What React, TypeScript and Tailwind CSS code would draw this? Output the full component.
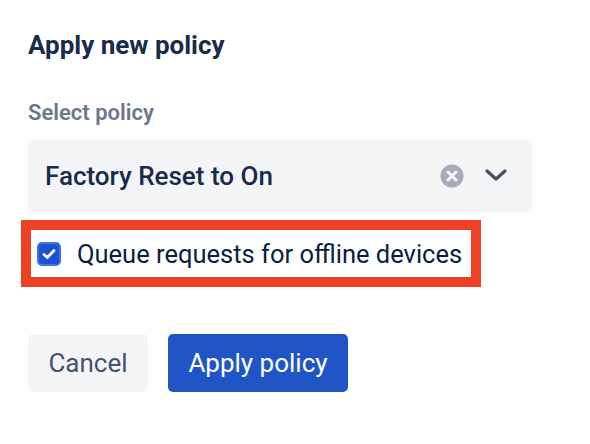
import React from "react";

export default function App() {
  return (
    <div className="w-[590px] h-[444px] bg-white font-['Roboto',sans-serif] text-[#172b4d]">
      <div className="pl-[28px] pt-[30px] flex flex-col">
        <h1 className="text-[26px] leading-[30px] font-bold">Apply new policy</h1>
        <div className="mt-[40px] text-[22px] leading-[26px] font-semibold text-[#6b778c]">Select policy</div>
        <div className="mt-[14px] w-[504px] h-[72px] rounded-[6px] bg-[#f4f5f7] flex items-center pl-[17px] pr-[24px]">
          <span className="flex-1 text-[26px] font-medium leading-[30px]">Factory Reset to On</span>
          <svg width="24" height="24" viewBox="0 0 24 24" className="mr-[20px]">
            <circle cx="12" cy="12" r="11.5" fill="#a5adba" />
            <path d="M8 8 L16 16 M16 8 L8 16" stroke="#f4f5f7" strokeWidth="3" strokeLinecap="round" />
          </svg>
          <svg width="24" height="24" viewBox="0 0 24 24" className="-mt-[3px]">
            <path d="M3 8 L12 16 L21 8" stroke="#42526e" strokeWidth="3.2" fill="none" strokeLinecap="round" strokeLinejoin="round" />
          </svg>
        </div>
        <div className="mt-[8px] -ml-[7px] w-[460px] h-[67px] border-[10px] border-[#ee4024] flex items-center pl-[6px]">
          <span className="w-[24px] h-[24px] rounded-[5px] bg-[#1d51cf] border-2 border-[#3a74f0] flex items-center justify-center shrink-0">
            <svg width="16" height="16" viewBox="0 0 16 16">
              <path d="M3 8.5 L6.3 11.5 L13 4.5" stroke="white" strokeWidth="2.8" fill="none" strokeLinecap="round" strokeLinejoin="round" />
            </svg>
          </span>
          <span className="ml-[16px] text-[25.5px] leading-[30px] text-[#091e42]">Queue requests for offline devices</span>
        </div>
        <div className="mt-[47px] flex gap-[20px]">
          <button className="w-[120px] h-[58px] rounded-[5px] bg-[#f4f5f7] text-[26px] text-[#42526e]">Cancel</button>
          <button className="w-[180px] h-[58px] rounded-[5px] bg-[#1f55c6] text-[26px] text-white">Apply policy</button>
        </div>
      </div>
    </div>
  );
}
